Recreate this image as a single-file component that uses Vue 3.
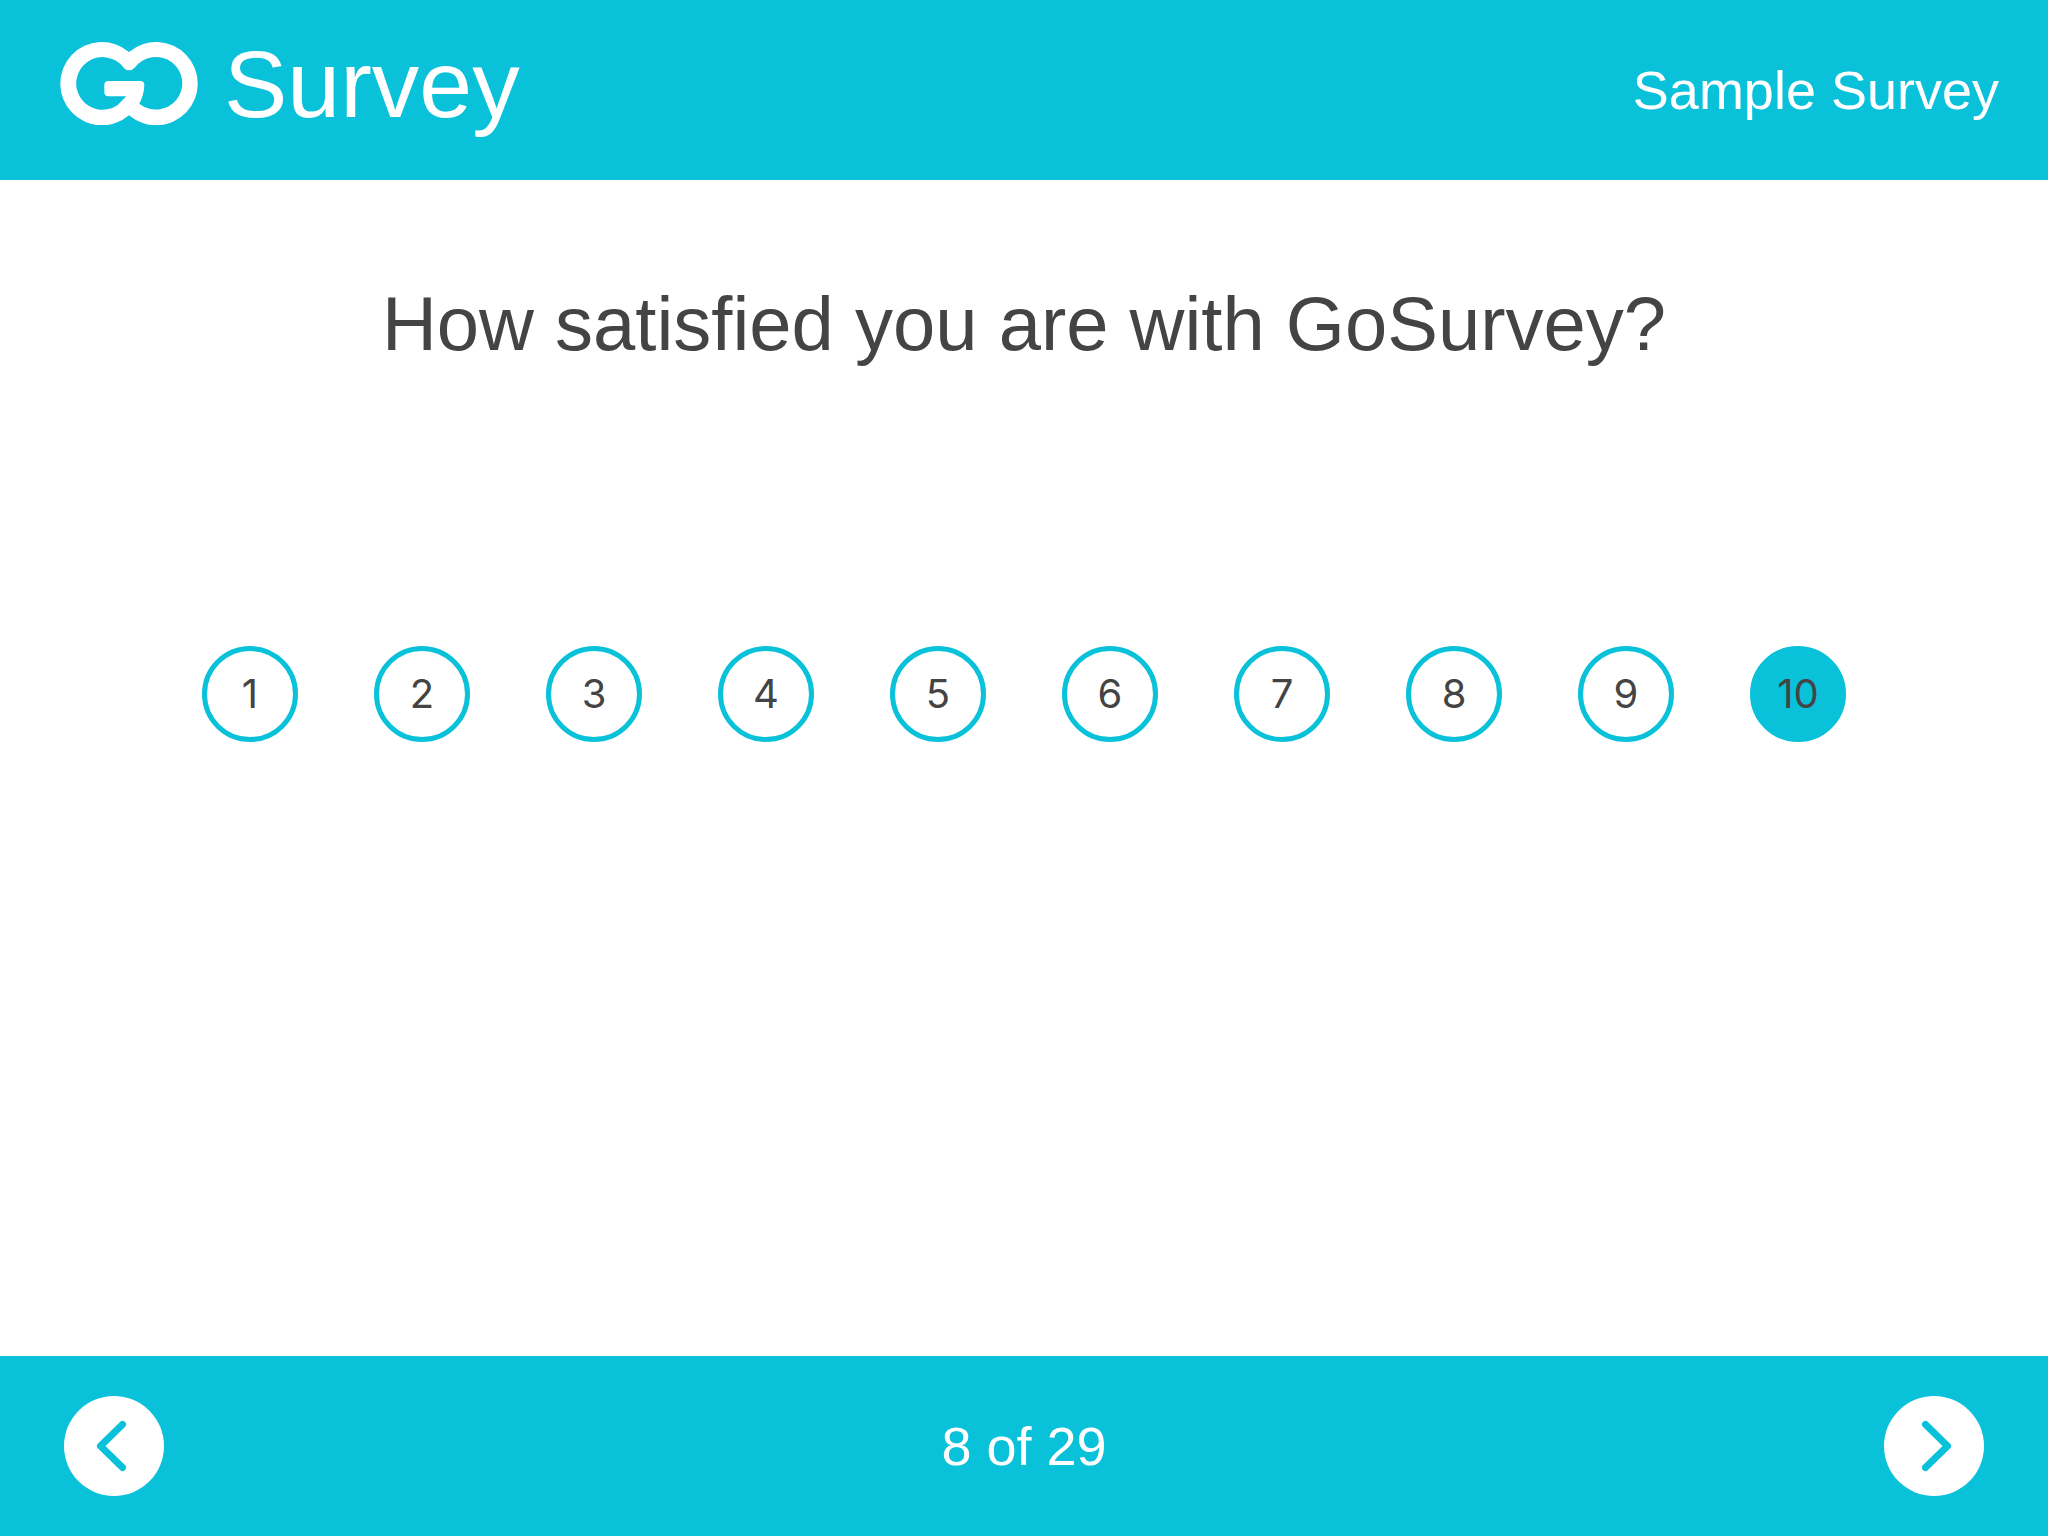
<script setup>
import { ref } from 'vue'

const scores = [1, 2, 3, 4, 5, 6, 7, 8, 9, 10]
const selected = ref(10)
</script>

<template>
  <div class="survey">
    <header class="bar header">
      <div class="brand">
        <svg class="mark" viewBox="59 65 414 249" role="img" aria-label="Go">
          <path
            fill="#fff"
            fill-rule="evenodd"
            d="M266 95A125 125 0 1 0 266 285A125 125 0 1 0 266 95ZM250 142A79 79 0 1 0 232 254L258 228H204Q192 228 192 216V194Q192 182 204 182H300Q312 182 312 194Q311 224 297 250A79 79 0 1 0 283 142Q275 150 266 150Q257 150 250 142Z"
          />
        </svg>
        <span class="brand-name">Survey</span>
      </div>
      <span class="label">Sample Survey</span>
    </header>

    <main class="content">
      <h1 id="question" class="question">How satisfied you are with GoSurvey?</h1>
      <div class="scale" role="radiogroup" aria-labelledby="question">
        <label v-for="n in scores" :key="n" class="score" :class="{ active: selected === n }">
          <input v-model="selected" class="radio" type="radio" name="score" :value="n" />
          <span>{{ n }}</span>
        </label>
      </div>
    </main>

    <footer class="bar footer">
      <button class="nav" type="button" aria-label="Previous">
        <svg viewBox="0 0 100 100"><path d="M58.500 28.500L36.500 50L58.500 71.500" /></svg>
      </button>
      <span class="label">8 of 29</span>
      <button class="nav" type="button" aria-label="Next">
        <svg viewBox="0 0 100 100"><path d="M41.500 28.500L63.500 50L41.500 71.500" /></svg>
      </button>
    </footer>
  </div>
</template>

<style>
body {
  margin: 0;
  background: #fff;
}
</style>

<style scoped>
.survey {
  display: flex;
  flex-direction: column;
  min-height: 100vh;
  font-family: "Liberation Sans", Arial, sans-serif;
  color: #444;
}

.bar {
  display: flex;
  align-items: center;
  justify-content: space-between;
  box-sizing: border-box;
  min-height: 180px;
  background: #0ac1da;
  color: #fff;
}

.header {
  padding: 0 49px 0 60px;
}

.footer {
  padding: 0 64px;
}

.brand {
  display: flex;
  align-items: center;
  gap: 26px;
  padding-bottom: 13px;
}

.mark {
  display: block;
  width: 138px;
  height: 83px;
}

.brand-name {
  font-size: 95px;
  line-height: 110px;
}

.label {
  font-size: 54px;
  line-height: 64px;
}

.content {
  flex: 1;
  padding: 96px 64px;
}

.question {
  margin: 0;
  font-size: 76px;
  font-weight: 400;
  line-height: 96px;
  text-align: center;
}

.scale {
  display: flex;
  justify-content: center;
  gap: 76px;
  margin-top: 274px;
}

.score {
  position: relative;
  display: flex;
  align-items: center;
  justify-content: center;
  box-sizing: border-box;
  width: 96px;
  height: 96px;
  border: 5px solid #0ac1da;
  border-radius: 50%;
  font-family: Inter, sans-serif;
  font-size: 40px;
  line-height: 48px;
  cursor: pointer;
}

.score.active {
  background: #0ac1da;
}

.radio {
  position: absolute;
  inset: 0;
  width: 100%;
  height: 100%;
  margin: 0;
  opacity: 0;
  cursor: pointer;
}

.nav {
  width: 100px;
  height: 100px;
  padding: 0;
  border: 0;
  border-radius: 50%;
  background: #fff;
  cursor: pointer;
}

.nav svg {
  display: block;
  width: 100%;
  height: 100%;
  fill: none;
  stroke: #0ac1da;
  stroke-width: 7;
  stroke-linecap: round;
  stroke-linejoin: round;
}
</style>
